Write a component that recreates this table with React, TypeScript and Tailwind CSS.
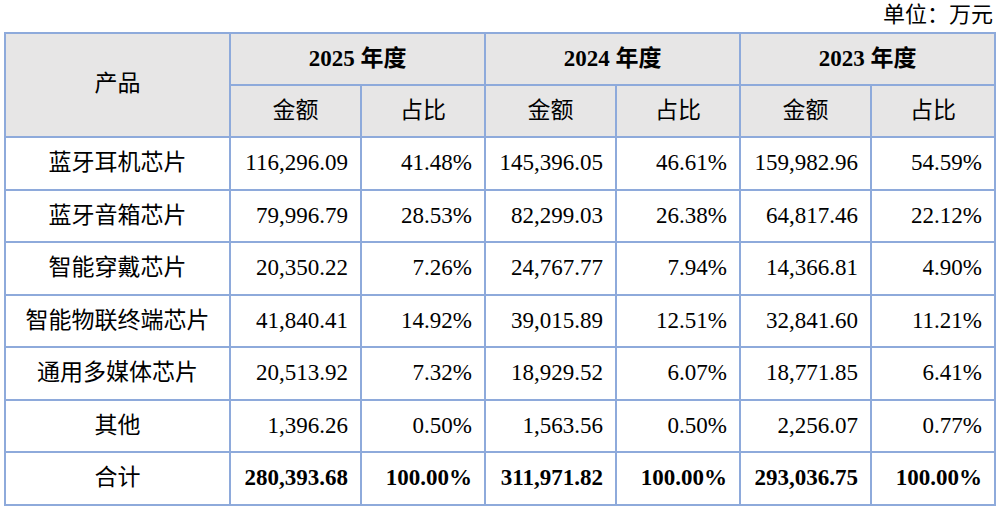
const rows = [
  ["蓝牙耳机芯片", "116,296.09", "41.48%", "145,396.05", "46.61%", "159,982.96", "54.59%"],
  ["蓝牙音箱芯片", "79,996.79", "28.53%", "82,299.03", "26.38%", "64,817.46", "22.12%"],
  ["智能穿戴芯片", "20,350.22", "7.26%", "24,767.77", "7.94%", "14,366.81", "4.90%"],
  ["智能物联终端芯片", "41,840.41", "14.92%", "39,015.89", "12.51%", "32,841.60", "11.21%"],
  ["通用多媒体芯片", "20,513.92", "7.32%", "18,929.52", "6.07%", "18,771.85", "6.41%"],
  ["其他", "1,396.26", "0.50%", "1,563.56", "0.50%", "2,256.07", "0.77%"],
];

const total = ["合计", "280,393.68", "100.00%", "311,971.82", "100.00%", "293,036.75", "100.00%"];

const years = ["2025", "2024", "2023"];

export default function App() {
  return (
    <div
      className="w-[1000px] h-[508px] bg-white text-black text-[23px] overflow-hidden"
      style={{ fontFamily: '"Liberation Serif", "Noto Sans CJK SC", serif' }}
    >
      <div className="h-[32px] pr-[7px] flex justify-end items-start leading-[30px] text-[22px]">
        单位：万元
      </div>
      <table className="ml-[4px] w-[990px] border-collapse table-fixed">
        <colgroup>
          <col className="w-[225px]" />
          <col className="w-[131px]" />
          <col className="w-[124px]" />
          <col className="w-[131px]" />
          <col className="w-[124px]" />
          <col className="w-[131px]" />
          <col className="w-[124px]" />
        </colgroup>
        <thead className="bg-[#e7e6e6]">
          <tr className="h-[52px]">
            <th rowSpan={2} className="border-2 border-[#8eaadb] font-normal text-center pb-[2px]">
              产品
            </th>
            {years.map((y) => (
              <th key={y} colSpan={2} className="border-2 border-[#8eaadb] font-bold text-center">
                {y} 年度
              </th>
            ))}
          </tr>
          <tr className="h-[52px]">
            {years.map((y) => (
              <>
                <th key={y + "a"} className="border-2 border-[#8eaadb] font-normal text-center">
                  金额
                </th>
                <th key={y + "b"} className="border-2 border-[#8eaadb] font-normal text-center">
                  占比
                </th>
              </>
            ))}
          </tr>
        </thead>
        <tbody>
          {rows.map((r) => (
            <tr key={r[0]} className="h-[52.5px]">
              {r.map((c, i) => (
                <td
                  key={i}
                  className={
                    i === 0
                      ? "border-2 border-[#8eaadb] text-center"
                      : "border-2 border-[#8eaadb] text-right pr-[12px]"
                  }
                >
                  {c}
                </td>
              ))}
            </tr>
          ))}
          <tr className="h-[52.5px]">
            {total.map((c, i) => (
              <td
                key={i}
                className={
                  i === 0
                    ? "border-2 border-[#8eaadb] text-center"
                    : "border-2 border-[#8eaadb] text-right pr-[12px] font-bold"
                }
              >
                {c}
              </td>
            ))}
          </tr>
        </tbody>
      </table>
    </div>
  );
}
